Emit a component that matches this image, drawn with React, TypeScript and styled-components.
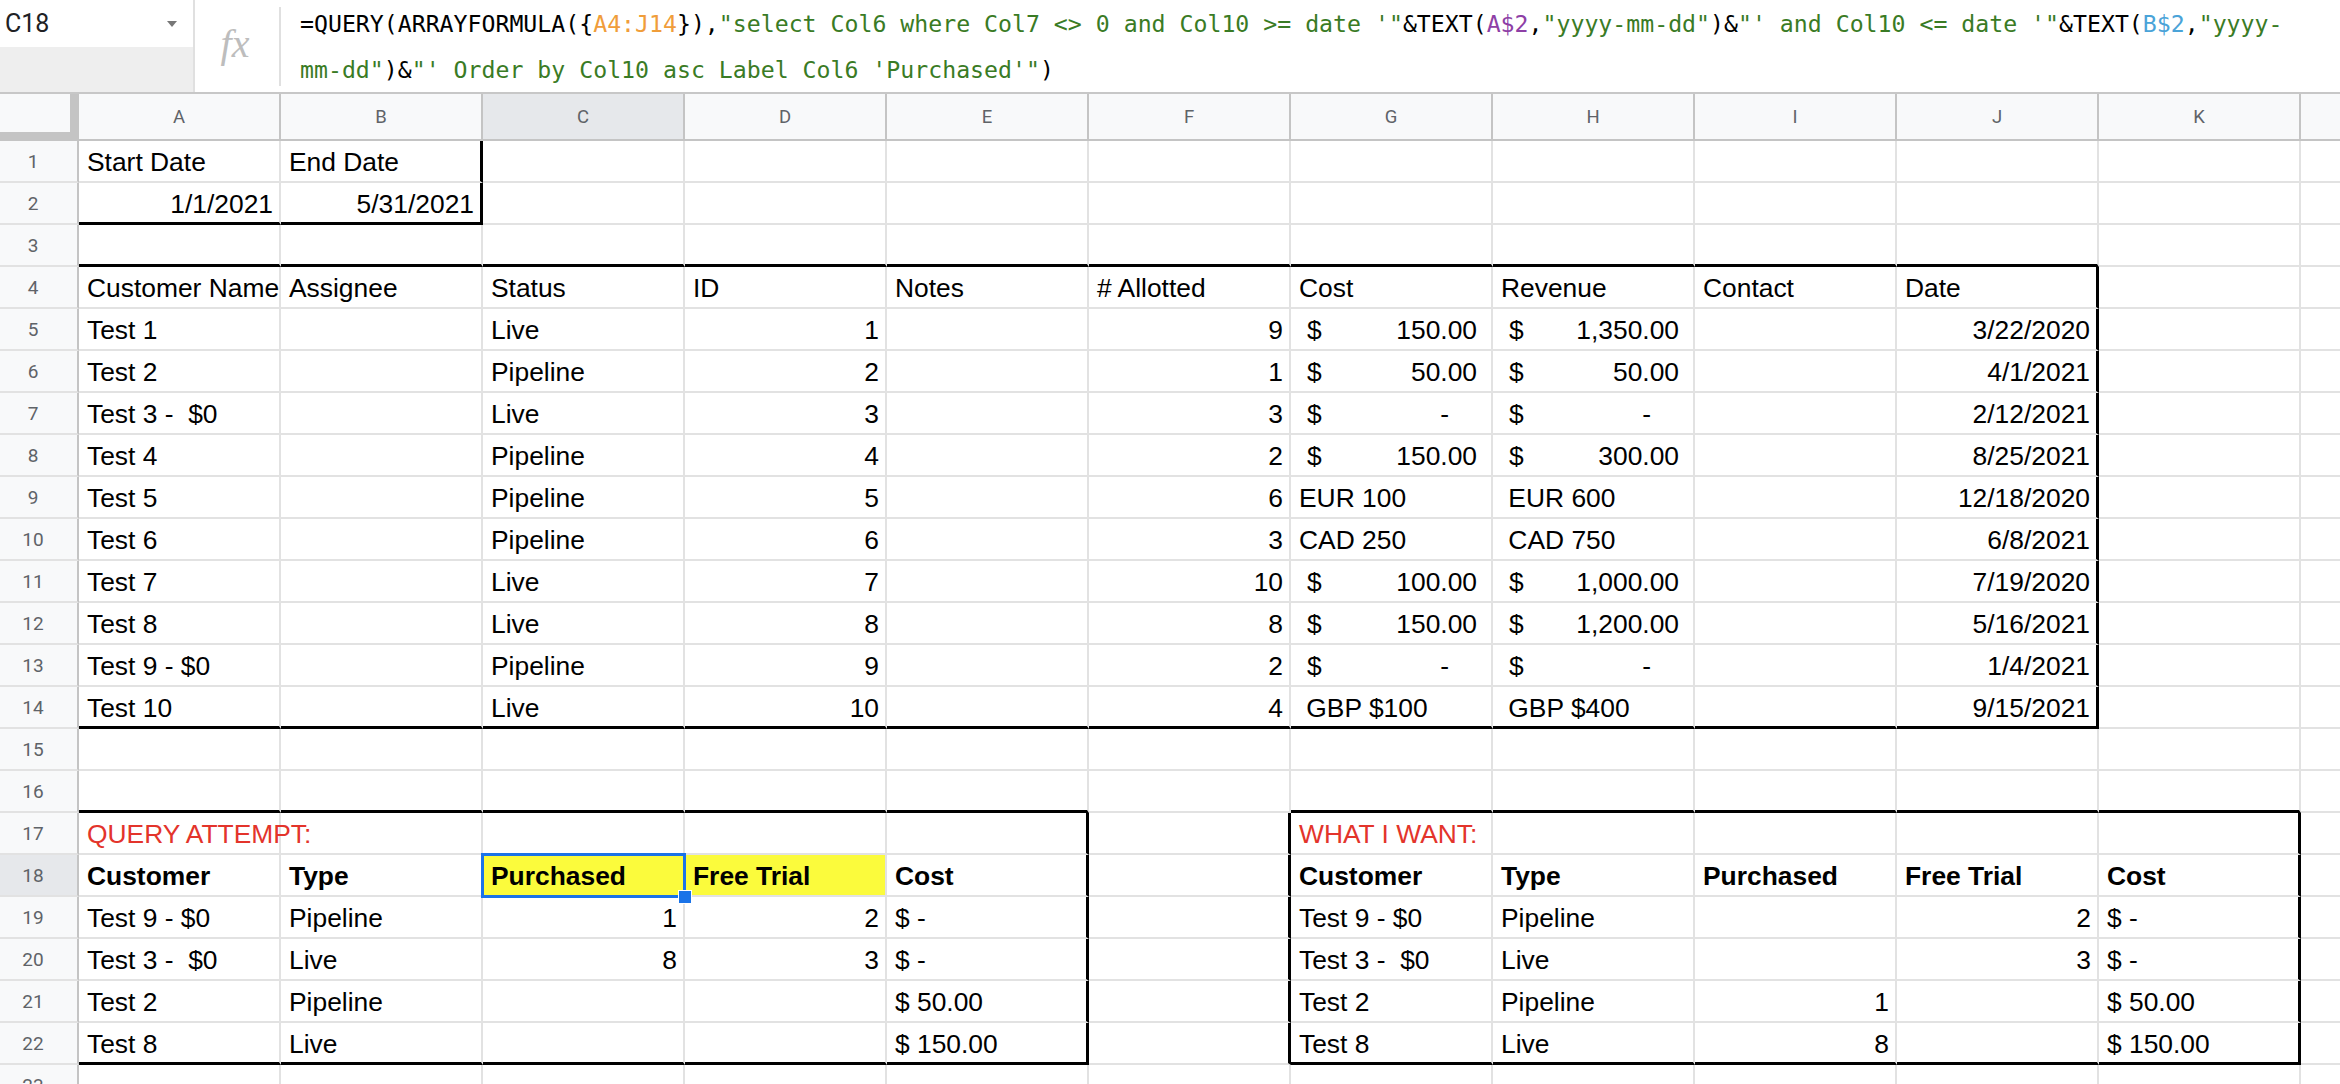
import React from "react";
import styled, { createGlobalStyle, css } from "styled-components";

type Spec = {
  text?: string;
  align?: "left" | "right";
  bold?: boolean;
  red?: boolean;
  fill?: boolean;
  amount?: string;
};
type Entry = string | Spec | null;

const COLS = ["A", "B", "C", "D", "E", "F", "G", "H", "I", "J", "K", "L"];
const ACTIVE_COL = 2;
const ACTIVE_ROW = 18;

const r = (text: string): Spec => ({ text, align: "right" });
const b = (text: string, fill = false): Spec => ({ text, bold: true, fill });
const red = (text: string): Spec => ({ text, red: true });
const acc = (amount: string): Spec => ({ amount });

const ROWS: Entry[][] = [
  ["Start Date", "End Date"],
  [r("1/1/2021"), r("5/31/2021")],
  [],
  ["Customer Name", "Assignee", "Status", "ID", "Notes", "# Allotted", "Cost", "Revenue", "Contact", "Date"],
  ["Test 1", null, "Live", r("1"), null, r("9"), acc("150.00"), acc("1,350.00"), null, r("3/22/2020")],
  ["Test 2", null, "Pipeline", r("2"), null, r("1"), acc("50.00"), acc("50.00"), null, r("4/1/2021")],
  ["Test 3 -  $0", null, "Live", r("3"), null, r("3"), acc("-"), acc("-"), null, r("2/12/2021")],
  ["Test 4", null, "Pipeline", r("4"), null, r("2"), acc("150.00"), acc("300.00"), null, r("8/25/2021")],
  ["Test 5", null, "Pipeline", r("5"), null, r("6"), "EUR 100", " EUR 600", null, r("12/18/2020")],
  ["Test 6", null, "Pipeline", r("6"), null, r("3"), "CAD 250", " CAD 750", null, r("6/8/2021")],
  ["Test 7", null, "Live", r("7"), null, r("10"), acc("100.00"), acc("1,000.00"), null, r("7/19/2020")],
  ["Test 8", null, "Live", r("8"), null, r("8"), acc("150.00"), acc("1,200.00"), null, r("5/16/2021")],
  ["Test 9 - $0", null, "Pipeline", r("9"), null, r("2"), acc("-"), acc("-"), null, r("1/4/2021")],
  ["Test 10", null, "Live", r("10"), null, r("4"), " GBP $100", " GBP $400", null, r("9/15/2021")],
  [],
  [],
  [red("QUERY ATTEMPT:"), null, null, null, null, null, red("WHAT I WANT:")],
  [b("Customer"), b("Type"), b("Purchased", true), b("Free Trial", true), b("Cost"), null, b("Customer"), b("Type"), b("Purchased"), b("Free Trial"), b("Cost")],
  ["Test 9 - $0", "Pipeline", r("1"), r("2"), "$ -", null, "Test 9 - $0", "Pipeline", null, r("2"), "$ -"],
  ["Test 3 -  $0", "Live", r("8"), r("3"), "$ -", null, "Test 3 -  $0", "Live", null, r("3"), "$ -"],
  ["Test 2", "Pipeline", null, null, "$ 50.00", null, "Test 2", "Pipeline", r("1"), null, "$ 50.00"],
  ["Test 8", "Live", null, null, "$ 150.00", null, "Test 8", "Live", r("8"), null, "$ 150.00"],
  [],
];

type TokKind = "k" | "s" | "o" | "p" | "b";
const FORMULA: [TokKind, string][][] = [
  [
    ["k", "=QUERY(ARRAYFORMULA({"],
    ["o", "A4:J14"],
    ["k", "}),"],
    ["s", "\"select Col6 where Col7 <> 0 and Col10 >= date '\""],
    ["k", "&TEXT("],
    ["p", "A$2"],
    ["k", ","],
    ["s", "\"yyyy-mm-dd\""],
    ["k", ")&"],
    ["s", "\"' and Col10 <= date '\""],
    ["k", "&TEXT("],
    ["b", "B$2"],
    ["k", ","],
    ["s", "\"yyyy-"],
  ],
  [
    ["s", "mm-dd\""],
    ["k", ")&"],
    ["s", "\"' Order by Col10 asc Label Col6 'Purchased'\""],
    ["k", ")"],
  ],
];

const TOK_COLORS: Record<TokKind, string> = {
  k: "#000000",
  s: "#3a7b25",
  o: "#f09d3a",
  p: "#8e3fa6",
  b: "#4aa3d8",
};

const blackBottom = (row: number, col: number) =>
  (row === 2 && col <= 1) ||
  ((row === 3 || row === 14) && col <= 9) ||
  ((row === 16 || row === 22) && (col <= 4 || (col >= 6 && col <= 10)));

const blackRight = (row: number, col: number) =>
  (row <= 2 && col === 1) ||
  (row >= 4 && row <= 14 && col === 9) ||
  (row >= 17 && row <= 22 && (col === 4 || col === 5 || col === 10));

const GlobalStyle = createGlobalStyle`
  html, body {
    margin: 0;
    padding: 0;
    background: #ffffff;
    overflow: hidden;
  }
  * {
    box-sizing: border-box;
  }
`;

const Page = styled.div`
  width: 2340px;
  height: 1084px;
  overflow: hidden;
  background: #ffffff;
`;

const TopBar = styled.div`
  display: flex;
  height: 94px;
  border-bottom: 2px solid #c7c7c7;
`;

const NameBox = styled.div`
  width: 195px;
  display: flex;
  flex-direction: column;
  border-right: 2px solid #e0e0e0;
`;

const NameField = styled.div`
  height: 47px;
  display: flex;
  align-items: center;
  justify-content: space-between;
  padding: 0 16px 0 5px;
  font-family: Roboto, "Liberation Sans", sans-serif;
  font-size: 25px;
  color: #202124;
`;

const Caret = styled.span`
  width: 0;
  height: 0;
  border-left: 5px solid transparent;
  border-right: 5px solid transparent;
  border-top: 6px solid #777777;
`;

const NameFill = styled.div`
  flex: 1;
  background: #eeeeee;
`;

const FxBox = styled.div`
  width: 84px;
  display: flex;
  align-items: center;
  justify-content: center;
  padding: 0 4px 6px 0;
  font-family: "Liberation Serif", serif;
  font-style: italic;
  font-size: 40px;
  color: #bdbdbd;
`;

const Divider = styled.div`
  width: 2px;
  margin: 7px 0 6px;
  background: #e0e0e0;
`;

const Formula = styled.div`
  flex: 1;
  padding: 1px 0 0 19px;
  font-family: "DejaVu Sans Mono", "Liberation Mono", monospace;
  font-size: 23.2px;
  line-height: 46px;
  white-space: pre;
`;

const Tok = styled.span<{ $kind: TokKind }>`
  color: ${(p) => TOK_COLORS[p.$kind]};
`;

const Sheet = styled.div`
  display: grid;
  grid-template-columns: 79px repeat(12, 202px);
  grid-template-rows: 47px repeat(23, 42px);
`;

const Corner = styled.div`
  background: #f8f9fa;
  border-right: 9px solid #c4c4c4;
  border-bottom: 9px solid #c4c4c4;
`;

const ColHead = styled.div<{ $active: boolean }>`
  display: flex;
  align-items: center;
  justify-content: center;
  background: ${(p) => (p.$active ? "#e6e8eb" : "#f8f9fa")};
  border-right: 2px solid #c4c4c4;
  border-bottom: 2px solid #c4c4c4;
  font-family: Roboto, "Liberation Sans", sans-serif;
  font-size: 18.5px;
  color: #5f6368;
`;

const RowHead = styled.div<{ $active: boolean }>`
  display: flex;
  align-items: center;
  justify-content: center;
  padding: 1px 11px 0 0;
  background: ${(p) => (p.$active ? "#e6e8eb" : "#f8f9fa")};
  border-right: 2px solid #c4c4c4;
  border-bottom: 2px solid #e2e2e2;
  font-family: Roboto, "Liberation Sans", sans-serif;
  font-size: 19px;
  color: #5f6368;
`;

const Cell = styled.div<{
  $align: "left" | "right" | "split";
  $bold: boolean;
  $red: boolean;
  $fill: boolean;
  $edgeRight: boolean;
  $edgeBottom: boolean;
  $active: boolean;
}>`
  position: relative;
  display: flex;
  align-items: center;
  justify-content: ${(p) =>
    p.$align === "right" ? "flex-end" : p.$align === "split" ? "space-between" : "flex-start"};
  padding: 3px 6px 0 8px;
  font-family: "Liberation Sans", Arial, sans-serif;
  font-size: 26.4px;
  font-weight: ${(p) => (p.$bold ? 700 : 400)};
  color: ${(p) => (p.$red ? "#e3342b" : "#000000")};
  background: ${(p) => (p.$fill ? "#fbfb3c" : "transparent")};
  white-space: pre;
  border-right: ${(p) => (p.$edgeRight ? "3px solid #000000" : "2px solid #e2e2e2")};
  border-bottom: ${(p) => (p.$edgeBottom ? "3px solid #000000" : "2px solid #e2e2e2")};

  ${(p) =>
    p.$active &&
    css`
      z-index: 1;
      &::after {
        content: "";
        position: absolute;
        top: -2px;
        left: -2px;
        right: -3px;
        bottom: -3px;
        border: 3px solid #1a73e8;
      }
      &::before {
        content: "";
        position: absolute;
        right: -9px;
        bottom: -9px;
        width: 12px;
        height: 12px;
        background: #1a73e8;
        border: 1px solid #ffffff;
        z-index: 2;
      }
    `}
`;

const Dollar = styled.span`
  margin-left: 8px;
`;

const Amount = styled.span<{ $dash: boolean }>`
  margin-right: ${(p) => (p.$dash ? "36px" : "8px")};
`;

const toSpec = (entry: Entry): Spec => {
  if (entry === null || entry === undefined) return {};
  if (typeof entry === "string") return { text: entry };
  return entry;
};

export default function App() {
  return (
    <Page>
      <GlobalStyle />
      <TopBar>
        <NameBox>
          <NameField>
            C18
            <Caret />
          </NameField>
          <NameFill />
        </NameBox>
        <FxBox>fx</FxBox>
        <Divider />
        <Formula>
          {FORMULA.map((line, li) => (
            <div key={li}>
              {line.map(([kind, text], ti) => (
                <Tok key={ti} $kind={kind}>
                  {text}
                </Tok>
              ))}
            </div>
          ))}
        </Formula>
      </TopBar>
      <Sheet>
        <Corner />
        {COLS.map((c, i) => (
          <ColHead key={c} $active={i === ACTIVE_COL}>
            {i < 11 ? c : ""}
          </ColHead>
        ))}
        {ROWS.map((cells, ri) => {
          const row = ri + 1;
          return (
            <React.Fragment key={row}>
              <RowHead $active={row === ACTIVE_ROW}>{row}</RowHead>
              {COLS.map((_, ci) => {
                const spec = toSpec(cells[ci] ?? null);
                const isAcc = spec.amount !== undefined;
                return (
                  <Cell
                    key={ci}
                    $align={isAcc ? "split" : spec.align ?? "left"}
                    $bold={!!spec.bold}
                    $red={!!spec.red}
                    $fill={!!spec.fill}
                    $edgeRight={blackRight(row, ci)}
                    $edgeBottom={blackBottom(row, ci)}
                    $active={row === ACTIVE_ROW && ci === ACTIVE_COL}
                  >
                    {isAcc ? (
                      <>
                        <Dollar>$</Dollar>
                        <Amount $dash={spec.amount === "-"}>{spec.amount}</Amount>
                      </>
                    ) : (
                      spec.text ?? ""
                    )}
                  </Cell>
                );
              })}
            </React.Fragment>
          );
        })}
      </Sheet>
    </Page>
  );
}
